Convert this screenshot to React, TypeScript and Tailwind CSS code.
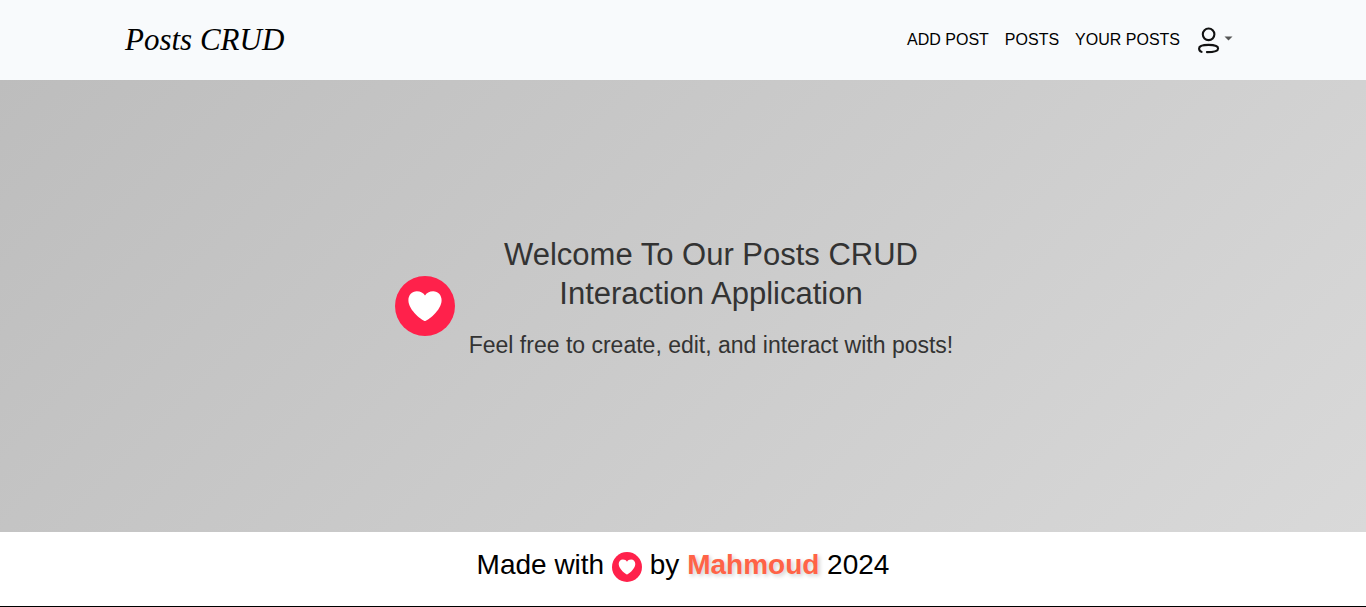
function HeartBadge({ className }: { className: string }) {
  return (
    <svg viewBox="0 0 60 60" className={className} role="img" aria-label="love">
      <circle cx="30" cy="30" r="30" fill="#ff214b" />
      <path
        d="M30 45C28 45 13.4 34.5 13.4 24.2C13.4 19 17 15.2 21.8 15.2C25.5 15.2 28.6 17 30 19.4C31.4 17 34.5 15.2 38.2 15.2C43 15.2 46.6 19 46.6 24.2C46.6 34.5 32 45 30 45Z"
        fill="#fff"
      />
    </svg>
  );
}

function UserIcon() {
  return (
    <svg viewBox="0 0 24 28" className="h-7 w-6" fill="none" stroke="#111" strokeWidth="2.1" strokeLinecap="round" aria-hidden="true">
      <circle cx="12.6" cy="8.3" r="5.8" />
      <path d="M5.6 25.9C3.9 25.2 3.1 24 3.1 22.4C3.1 20 7 18.9 12.6 18.9C18.2 18.9 22.1 20 22.1 22.4C22.1 25.1 17.5 26.1 10.9 26.1" />
    </svg>
  );
}

export default function App() {
  return (
    <div className="flex min-h-screen flex-col border-b border-black bg-white font-['Liberation_Sans',Arial,sans-serif] text-black">
      <header className="bg-[#f8fafc]">
        <nav className="mx-auto flex h-20 max-w-[1140px] items-center justify-between px-3">
          <a href="#home" className="font-['Liberation_Serif',serif] text-[31px] leading-10 italic">
            Posts CRUD
          </a>
          <div className="flex items-center">
            <a href="#add" className="px-2">ADD POST</a>
            <a href="#posts" className="px-2">POSTS</a>
            <a href="#yours" className="px-2">YOUR POSTS</a>
            <button type="button" aria-label="Account menu" className="flex items-center gap-1 px-2">
              <UserIcon />
              <svg viewBox="0 0 9 5" className="mb-1 h-[5px] w-[9px]" fill="#555" aria-hidden="true">
                <path d="M0.5 0.5H8.5L4.5 4.5Z" />
              </svg>
            </button>
          </div>
        </nav>
      </header>
      <main className="flex flex-1 items-center justify-center bg-linear-[135deg,#bdbdbd,#d9d9d9] px-4 text-[#333]">
        <div className="flex items-center pr-1">
          <HeartBadge className="size-[60px] shrink-0" />
          <div className="max-w-lg pb-4 text-center">
            <h1 className="mb-4 px-8 text-[31px] leading-[39px]">Welcome To Our Posts CRUD Interaction Application</h1>
            <p className="text-[23px] leading-8">Feel free to create, edit, and interact with posts!</p>
          </div>
        </div>
      </main>
      <footer className="flex h-[74px] items-start justify-center pt-3">
        <p className="text-[28px] leading-[42px]">
          Made with <HeartBadge className="inline-block size-[30px]" /> by{" "}
          <strong className="text-[#ff6347] [text-shadow:2px_2px_4px_rgba(0,0,0,0.2)]">Mahmoud</strong> 2024
        </p>
      </footer>
    </div>
  );
}
